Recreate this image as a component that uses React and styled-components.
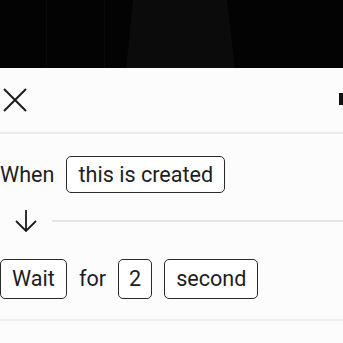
import React from "react";
import styled, { createGlobalStyle } from "styled-components";

const GlobalStyle = createGlobalStyle`
  html, body {
    margin: 0;
    padding: 0;
    background: #fcfcfc;
    font-family: Roboto, "Liberation Sans", sans-serif;
    overflow: hidden;
  }
`;

const Page = styled.div`
  width: 343px;
  height: 343px;
  display: flex;
  flex-direction: column;
  overflow: hidden;
`;

const Backdrop = styled.div`
  height: 68px;
  flex: none;
  background: #030304;

  svg {
    display: block;
  }
`;

const Sheet = styled.div`
  flex: 1;
  background: #fcfcfc;
  display: flex;
  flex-direction: column;
`;

const Header = styled.div`
  height: 64px;
  display: flex;
  align-items: center;
  justify-content: space-between;
  padding-left: 3px;
  border-bottom: 2px solid #ececec;
`;

const IconButton = styled.button`
  border: none;
  background: none;
  padding: 0;
  width: 24px;
  height: 24px;
  display: flex;
  color: #1b1b1b;
`;

const EdgeMark = styled.div`
  width: 4px;
  height: 12px;
  background: #111;
  margin-top: -2px;
`;

const Body = styled.div`
  display: flex;
  flex-direction: column;
  padding-top: 22px;
`;

const Row = styled.div`
  display: flex;
  align-items: center;
  gap: ${(p) => p.gap || 12}px;
`;

const Word = styled.span`
  font-size: 21.6px;
  color: #1e1e1e;
  line-height: 1;
`;

const Chip = styled.button`
  font-family: Roboto, "Liberation Sans", sans-serif;
  font-size: 21.6px;
  color: #1e1e1e;
  background: #fff;
  border: 1px solid #2a2a2a;
  border-radius: 5px;
  height: ${(p) => p.h || 37}px;
  padding: 0 ${(p) => p.px || 11}px;
  display: flex;
  align-items: center;
  line-height: 1;
`;

const Connector = styled.div`
  display: flex;
  align-items: center;
  gap: 15px;
  height: 26px;
  margin: 15px 0 25px 15px;
`;

const Line = styled.div`
  flex: 1;
  height: 2px;
  background: #e6e6e6;
`;

const Divider = styled.div`
  height: 2px;
  background: #f0f0f0;
  margin-top: 20px;
`;

export default function App() {
  return (
    <Page>
      <GlobalStyle />
      <Backdrop>
        <svg width="343" height="68">
          <polygon points="133,0 227,0 235,68 126,68" fill="#0b0b0b" />
          <rect x="46" y="0" width="1" height="68" fill="#0a0a0b" />
          <rect x="104" y="0" width="1" height="68" fill="#0a0a0b" />
        </svg>
      </Backdrop>
      <Sheet>
        <Header>
          <IconButton aria-label="close">
            <svg width="24" height="24" viewBox="0 0 24 24">
              <path d="M1 1L23 23M23 1L1 23" stroke="currentColor" strokeWidth="2" />
            </svg>
          </IconButton>
          <EdgeMark />
        </Header>
        <Body>
          <Row>
            <Word>When</Word>
            <Chip>this is created</Chip>
          </Row>
          <Connector>
            <svg width="22" height="24" viewBox="0 0 22 24">
              <path d="M11 1V22M1 12L11 22L21 12" stroke="#1b1b1b" strokeWidth="1.8" fill="none" />
            </svg>
            <Line />
          </Connector>
          <Row>
            <Chip h={40}>Wait</Chip>
            <Word>for</Word>
            <Chip h={40} px={10}>2</Chip>
            <Chip h={40}>second</Chip>
          </Row>
          <Divider />
        </Body>
      </Sheet>
    </Page>
  );
}
